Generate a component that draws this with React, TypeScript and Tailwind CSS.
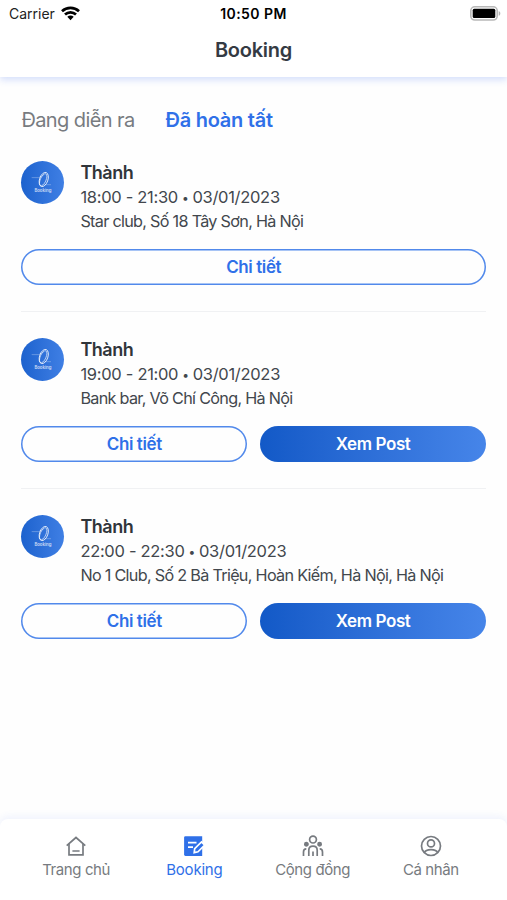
import { useState } from "react";

const bookings = [
  { id: 1, name: "Thành", time: "18:00 - 21:30", date: "03/01/2023", address: "Star club, Số 18 Tây Sơn, Hà Nội", hasPost: false },
  { id: 2, name: "Thành", time: "19:00 - 21:00", date: "03/01/2023", address: "Bank bar, Võ Chí Công, Hà Nội", hasPost: true },
  { id: 3, name: "Thành", time: "22:00 - 22:30", date: "03/01/2023", address: "No 1 Club, Số 2 Bà Triệu, Hoàn Kiếm, Hà Nội, Hà Nội", hasPost: true },
];

function WifiIcon() {
  return (
    <svg className="-mt-[2px] h-[15px] w-[19px]" viewBox="0 0 19 15" fill="none" stroke="#000" strokeWidth="2.7">
      <path d="M1 5.2C5.8.7 13.2.7 18 5.2" />
      <path d="M4 8.5c3.1-2.9 7.9-2.9 11 0" />
      <path d="M6.3 10.800c1.900-1.600 4.500-1.600 6.400 0L9.500 14.200z" fill="#000" stroke="none" />
    </svg>
  );
}

function BatteryIcon() {
  return (
    <svg className="-mt-px h-[15px] w-[31px]" viewBox="0 0 31 15">
      <rect x=".8" y=".8" width="26.4" height="13.2" rx="4" fill="#fff" stroke="#b8b8b8" strokeWidth="1.600" />
      <rect x="2.700" y="2.800" width="22.600" height="9.200" rx="1.500" fill="#000" />
      <path d="M28.700 5v4.800c1-.4 1.600-1.300 1.600-2.400S29.700 5.400 28.700 5z" fill="#b3b3b3" />
    </svg>
  );
}

function HomeIcon() {
  return (
    <svg className="h-6 w-6" viewBox="0 0 24 24" fill="none" stroke="currentColor" strokeWidth="1.700">
      <path d="M2.700 11.600 12 3.500l9.300 8.100" />
      <path d="M5 10v10.900h14V10M8.400 17h7.200" />
    </svg>
  );
}

function BookingIcon() {
  return (
    <svg className="h-6 w-6" viewBox="0 0 24 24" fill="none">
      <path d="M3.400 2.200H20.200V21.900H3.400q-1.300 0-1.300-1.300V3.500q0-1.300 1.300-1.300z" fill="currentColor" />
      <path d="M6 8.700h8.500M6 13.200h5" stroke="#fff" strokeWidth="1.700" />
      <path d="m12.200 18.600.5-4 6.800-6.700 3.200 3.200-6.700 6.700z" fill="currentColor" stroke="#fff" strokeWidth="1.700" />
    </svg>
  );
}

function CommunityIcon() {
  return (
    <svg className="h-6 w-6" viewBox="0 0 24 24" fill="none" stroke="currentColor" strokeWidth="1.700">
      <circle cx="12" cy="5.600" r="3.400" />
      <circle cx="5.400" cy="10.200" r="1.600" fill="currentColor" />
      <circle cx="18.600" cy="10.200" r="1.600" fill="currentColor" />
      <path d="M7.800 21.900v-5.700c0-5.400 8.400-5.400 8.400 0v5.700" />
      <path d="M12 21.900v-4.500" />
      <path d="M2.500 21.900v-4c0-2 1.100-3 2.800-3M21.500 21.900v-4c0-2-1.100-3-2.800-3" />
    </svg>
  );
}

function UserIcon() {
  return (
    <svg className="h-6 w-6" viewBox="0 0 24 24" fill="none" stroke="currentColor" strokeWidth="1.700">
      <circle cx="12" cy="12" r="9.500" />
      <circle cx="12" cy="9.400" r="3.500" />
      <path d="M5.300 18.700c1.600-4.200 11.800-4.200 13.400 0" />
    </svg>
  );
}

function Avatar() {
  return (
    <div className="flex h-[43px] w-[43px] shrink-0 flex-col items-center rounded-full bg-linear-to-r from-[#1c62ce] to-[#3f7fe4]">
      <svg className="mt-[10px] h-[17px] w-[24px] shrink-0" viewBox="0 0 24 18" fill="none" stroke="#fff">
        <ellipse cx="12.800" cy="9" rx="4.400" ry="7.800" transform="rotate(19 12.800 9)" strokeWidth=".8" />
        <ellipse cx="12.200" cy="9.300" rx="3" ry="6.900" transform="rotate(24 12.200 9.300)" strokeWidth=".6" />
        <path d="M0 7h7.300l5.200-2.500M13.500 14.500h7" strokeWidth=".5" opacity=".6" />
      </svg>
      <span className="text-[4.300px] leading-[5px] font-semibold text-white/75">Booking</span>
    </div>
  );
}

function BookingCard({ booking }: { booking: (typeof bookings)[0] }) {
  return (
    <div className="h-[177px] border-b border-[#f0f1f3] pt-[26px] last:border-none">
      <div className="flex h-[88px] gap-4">
        <Avatar />
        <div className="whitespace-nowrap text-[#42474d]">
          <p className="h-[25px] text-[18px] leading-[23px] font-semibold tracking-[-0.5px] text-[#30353a]">{booking.name}</p>
          <p className="flex h-[24px] items-center pb-px text-[16.500px] leading-[23px] tracking-[-0.3px]">
            {booking.time}
            <span className="mx-[4px] text-[12px]">•</span>
            {booking.date}
          </p>
          <p className="h-[25px] text-[16.200px] leading-[23px] tracking-[-0.7px]">{booking.address}</p>
        </div>
      </div>
      <div className="flex gap-[13px] text-[17px] leading-[24px] font-semibold tracking-[-0.4px]">
        <button className="h-[36px] flex-1 rounded-full text-[#2f70e8] shadow-[inset_0_0_0_1.500px_#5189eb]">Chi tiết</button>
        {booking.hasPost && (
          <button className="h-[36px] flex-1 rounded-full bg-linear-to-r from-[#1259c7] to-[#4685e9] text-white">Xem Post</button>
        )}
      </div>
    </div>
  );
}

const navItems = [
  { label: "Trang chủ", icon: <HomeIcon /> },
  { label: "Booking", icon: <BookingIcon /> },
  { label: "Cộng đồng", icon: <CommunityIcon /> },
  { label: "Cá nhân", icon: <UserIcon /> },
];

export default function App() {
  const [tab, setTab] = useState(1);
  const [page, setPage] = useState(1);

  return (
    <div className="flex h-[900px] w-[507px] flex-col overflow-hidden bg-[#fefefe] font-['Inter','Liberation_Sans',sans-serif]">
      <header className="h-[77px] shrink-0 bg-white shadow-[0_3px_7px_rgba(50,100,240,0.2)]">
        <div className="grid h-7 grid-cols-3 items-center pr-[6px] pl-[9px] text-[14px]">
          <div className="flex items-center gap-[6px] text-[#222]">
            <span className="-mt-px">Carrier</span>
            <WifiIcon />
          </div>
          <span className="-mt-px -ml-[3px] text-center font-semibold tracking-[0.45px] text-black">10:50 PM</span>
          <div className="flex justify-end"><BatteryIcon /></div>
        </div>
        <h1 className="text-center text-[20px] leading-[45px] font-semibold tracking-[-0.25px] text-[#343a43]">Booking</h1>
      </header>

      <main className="flex-1 pr-[21px] pl-[21.400px]">
        <div className="flex h-[58px] items-end gap-[31px] text-[20px] leading-[30px] whitespace-nowrap">
          {["Đang diễn ra", "Đã hoàn tất"].map((label, i) => (
            <button
              key={label}
              onClick={() => setTab(i)}
              className={tab === i ? "font-semibold tracking-[-0.25px] text-[#2f70e8]" : "tracking-[-0.6px] text-[#777b80]"}
            >
              {label}
            </button>
          ))}
        </div>
        {bookings.map((booking) => (
          <BookingCard key={booking.id} booking={booking} />
        ))}
      </main>

      <nav className="flex h-[81px] shrink-0 rounded-t-lg bg-white px-[17px] pt-[15px] shadow-[0_-3px_7px_rgba(50,100,240,0.07)]">
        {navItems.map((item, i) => (
          <button
            key={item.label}
            onClick={() => setPage(i)}
            className={`flex flex-1 flex-col items-center text-[15px] whitespace-nowrap ${
              page === i ? "tracking-[-0.2px] text-[#2f70e8]" : "tracking-[-0.4px] text-[#777b80]"
            }`}
          >
            {item.icon}
            <span className="leading-6">{item.label}</span>
          </button>
        ))}
      </nav>
    </div>
  );
}
